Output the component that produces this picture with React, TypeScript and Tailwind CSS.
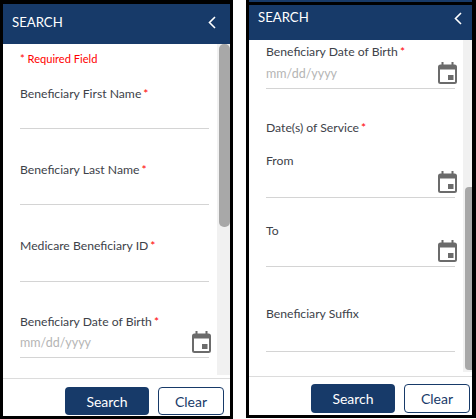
import React from 'react';

const CalendarIcon = () => (
  <svg className="w-[19px] h-[22px] text-[#6b6b6b]" viewBox="0 0 19 22" fill="currentColor">
    <path fillRule="evenodd" d="M3.5 0h2v2.5h8V0h2v2.5h1A2.5 2.5 0 0 1 19 5v14.5a2.5 2.5 0 0 1-2.5 2.5h-14A2.5 2.5 0 0 1 0 19.5V5a2.5 2.5 0 0 1 2.5-2.5h1V0zM2 7.5v12a.5.5 0 0 0 .5.5h14a.5.5 0 0 0 .5-.5v-12H2z" />
    <rect x="10" y="13" width="5.5" height="5" />
  </svg>
);

const Req = () => <span className="text-[#f00] ml-[2px] text-[12px]">*</span>;

const Label = ({ text, required, className }: { text: string; required?: boolean; className?: string }) => (
  <div className={`text-[12.2px] leading-[16px] text-[#3d4249] ${className ?? ''}`}>
    {text}
    {required && <Req />}
  </div>
);

const DateInput = ({ placeholder, className }: { placeholder?: string; className?: string }) => (
  <div className={`flex items-end justify-between border-b border-[#d4d4d4] ${className}`}>
    <span className="text-[12.5px] leading-[16px] text-[#b5b5b5] mb-[6px]">{placeholder}</span>
    <span className="flex mb-[4px] -mr-[2px]">
      <CalendarIcon />
    </span>
  </div>
);

const Line = ({ className }: { className: string }) => <div className={`border-b border-[#d4d4d4] ${className}`} />;

export default function App() {
  return (
    <div className="flex w-[476px] h-[419px] bg-white font-['Lato',sans-serif]">
      {/* left capture */}
      <div className="flex flex-col w-[233px] h-[419px] border-[3px] border-t-[4px] border-black">
        <div className="flex items-center justify-between bg-[#173a69] text-white pl-[9px] pr-[14px] pb-[3px] h-[40px] shrink-0">
          <span className="text-[13.2px]">SEARCH</span>
          <svg width="8" height="13" viewBox="0 0 8 13" fill="none" stroke="currentColor" strokeWidth="1.6">
            <path d="M7 1 1.5 6.5 7 12" />
          </svg>
        </div>
        <div className="flex flex-1 min-h-0">
          <div className="flex-1 pl-[17px] pr-[8px] pt-[8px]">
            <div className="text-[11.1px] leading-[14px] text-[#f00]">* Required Field</div>
            <Label text="Beneficiary First Name" required className="mt-[20px]" />
            <Line className="h-[27px]" />
            <Label text="Beneficiary Last Name" required className="mt-[33px]" />
            <Line className="h-[27px]" />
            <Label text="Medicare Beneficiary ID" required className="mt-[33px]" />
            <Line className="h-[28px]" />
            <Label text="Beneficiary Date of Birth" required className="mt-[32px]" />
            <DateInput placeholder="mm/dd/yyyy" className="h-[28px]" />
          </div>
          <div className="w-[13px] mb-[3px] bg-[#f1f1f1] flex justify-end">
            <div className="w-[11px] h-[183px] rounded-[5px] bg-[#a8a8a8]" />
          </div>
        </div>
        <div className="flex justify-end gap-[9px] border-t border-[#dcdcdc] bg-white pt-[8px] pr-[6px] h-[38px] shrink-0">
          <button className="w-[84px] h-[28px] rounded-[4px] bg-[#173a69] text-white text-[14px]">Search</button>
          <button className="w-[66px] h-[28px] rounded-[4px] border border-[#173a69] bg-white text-[#173a69] text-[14px]">Clear</button>
        </div>
      </div>
      {/* right capture */}
      <div className="flex flex-col w-[230px] h-[418px] ml-[13px] border-l-[3px] border-r-[4px] border-b-[3px] border-black">
        <div className="h-[2px] bg-[#173a69] shrink-0" />
        <div className="h-[3px] bg-black shrink-0" />
        <div className="flex items-center justify-between bg-[#173a69] text-white pl-[9px] pr-[10px] pb-[9px] h-[35px] shrink-0">
          <span className="text-[13.2px]">SEARCH</span>
          <svg width="8" height="13" viewBox="0 0 8 13" fill="none" stroke="currentColor" strokeWidth="1.6">
            <path d="M7 1 1.5 6.5 7 12" />
          </svg>
        </div>
        <div className="flex flex-1 min-h-0">
          <div className="flex-1 pl-[17px] pr-[8px] pt-[4px]">
            <Label text="Beneficiary Date of Birth" required />
            <DateInput placeholder="mm/dd/yyyy" className="h-[29px]" />
            <Label text="Date(s) of Service" required className="mt-[31px]" />
            <Label text="From" className="mt-[17px]" />
            <DateInput className="h-[29px]" />
            <Label text="To" className="mt-[25px]" />
            <DateInput className="h-[28px]" />
            <Label text="Beneficiary Suffix" className="mt-[39px]" />
            <Line className="h-[30px]" />
          </div>
          <div className="w-[9px] mb-[4px] bg-[#f1f1f1] flex justify-end pt-[147px]">
            <div className="w-[7px] h-[183px] rounded-l-[4px] bg-[#a8a8a8]" />
          </div>
        </div>
        <div className="flex justify-end gap-[9px] border-t border-[#dcdcdc] bg-white pt-[7px] pr-[2px] h-[39px] shrink-0">
          <button className="w-[84px] h-[29px] rounded-[4px] bg-[#173a69] text-white text-[14px]">Search</button>
          <button className="w-[66px] h-[29px] rounded-[4px] border border-[#173a69] bg-white text-[#173a69] text-[14px]">Clear</button>
        </div>
      </div>
    </div>
  );
}
